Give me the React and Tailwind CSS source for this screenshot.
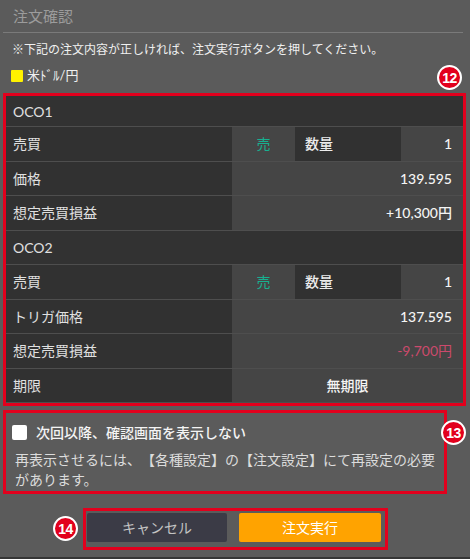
import React from "react";

const FONT = { fontFamily: "Lato, 'Noto Sans CJK JP', sans-serif" };

function Badge({ n, className }) {
  return (
    <div
      className={`absolute w-[25px] h-[25px] rounded-full bg-[#e2001d] border-[2px] border-white flex items-center justify-center text-white text-[14px] font-bold leading-none tracking-[-0.5px] ${className}`}
      style={{ fontFamily: "'Liberation Sans', Arial, sans-serif" }}
    >
      {n}
    </div>
  );
}

function HeaderRow({ text, first }) {
  return (
    <div
      className={`flex items-center ${first ? "h-[31px]" : "h-[34.5px]"} border-b border-[#4e4e4e] bg-[#323232] pl-[7px] text-[14px] text-[#e0e0e0]`}
    >
      {text}
    </div>
  );
}

function Row({ label, value, valueClass = "text-[#f4f4f4] font-medium", center }) {
  return (
    <div className="flex h-[34.5px] border-b border-[#4e4e4e]">
      <div className="w-[226px] bg-[#313131] flex items-center pl-[7px] text-[14px] text-[#e0e0e0]">
        {label}
      </div>
      <div
        className={`flex-1 bg-[#454545] flex items-center text-[14px] ${
          center ? "justify-center" : "justify-end pr-[11px]"
        } ${valueClass}`}
      >
        {value}
      </div>
    </div>
  );
}

function TradeRow() {
  return (
    <div className="flex h-[34.5px] border-b border-[#4e4e4e]">
      <div className="w-[226px] bg-[#313131] flex items-center pl-[7px] text-[14px] text-[#e0e0e0]">
        売買
      </div>
      <div className="w-[63px] bg-[#454545] flex items-center justify-center text-[14px] text-[#17b090]">
        売
      </div>
      <div className="w-[106px] bg-[#313131] flex items-center pl-[10px] text-[14px] text-[#ececec] font-medium">
        数量
      </div>
      <div className="flex-1 bg-[#454545] flex items-center justify-end pr-[11px] text-[14px] text-[#f4f4f4] font-medium">
        1
      </div>
    </div>
  );
}

export default function App() {
  return (
    <div
      className="relative w-[470px] h-[559px] bg-[#5b5b5b] overflow-hidden flex flex-col box-border border-b-[2px] border-[#363636] [text-spacing-trim:space-all]"
      style={FONT}
    >
      {/* title */}
      <div className="ml-[3px] w-[460px] h-[33px] border-b border-[#7a7a7a] flex items-center pl-[10px] text-[15px] text-[#9c9c9c]">
        注文確認
      </div>
      {/* instruction */}
      <div className="h-[34px] flex items-center pl-[12px] text-[12px] text-[#f0f0f0]">
        ※下記の注文内容が正しければ、注文実行ボタンを押してください。
      </div>
      {/* currency */}
      <div className="h-[18px] flex items-center pl-[11px] gap-[4px] text-[13px] text-[#f0f0f0]">
        <span className="w-[12px] h-[12px] bg-[#fff200] rounded-[1px]" />
        <span>米ﾄﾞﾙ/円</span>
      </div>

      {/* table */}
      <div className="mt-[8px] ml-[3px] w-[463px] border-[3px] border-[#e2001d]">
        <HeaderRow text="OCO1" first />
        <TradeRow />
        <Row label="価格" value="139.595" />
        <Row label="想定売買損益" value="+10,300円" />
        <HeaderRow text="OCO2" />
        <TradeRow />
        <Row label="トリガ価格" value="137.595" />
        <Row label="想定売買損益" value="-9,700円" valueClass="text-[#cc4a6c]" />
        <Row label="期限" value="無期限" center />
      </div>

      {/* confirm settings */}
      <div className="mt-[4px] ml-[3px] w-[444px] border-[3px] border-[#e2001d] pb-[1px]">
        <div className="mt-[8px] h-[22px] flex items-center pl-[6px] gap-[9px]">
          <span className="w-[15px] h-[15px] bg-white rounded-[2px]" />
          <span className="text-[14px] text-[#f4f4f4] font-medium">次回以降、確認画面を表示しない</span>
        </div>
        <div className="mt-[7px] pl-[9px] pr-[4px] text-[14px] leading-[20px] text-[#dcdcdc]">
          再表示させるには、【各種設定】の【注文設定】にて再設定の必要があります。
        </div>
      </div>

      {/* buttons */}
      <div className="mt-[14px] ml-[83px] w-[305px] border-[3px] border-[#e2001d] pt-[2px] pb-[5px] pl-[1px] pr-[4px] flex gap-[12px]">
        <button className="w-[140px] h-[29px] bg-[#3b3b46] rounded-[2px] text-[14px] text-[#c4c4c4] flex items-center justify-center">
          キャンセル
        </button>
        <button className="flex-1 h-[29px] bg-[#ffa300] rounded-[2px] text-[14px] text-white flex items-center justify-center">
          注文実行
        </button>
      </div>

      <Badge n="12" className="left-[437px] top-[65px]" />
      <Badge n="13" className="left-[441px] top-[420px]" />
      <Badge n="14" className="left-[53px] top-[516px]" />
    </div>
  );
}
